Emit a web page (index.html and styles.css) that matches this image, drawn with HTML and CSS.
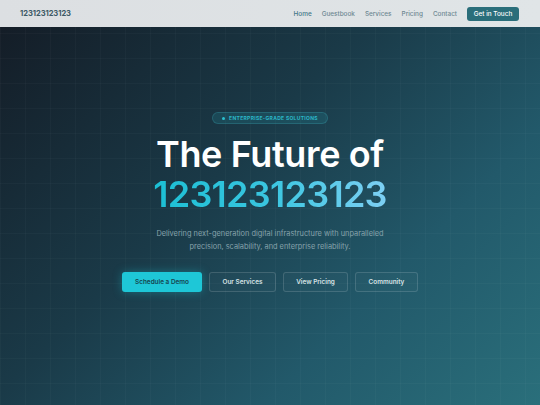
FILE: index.html
```html
<!DOCTYPE html>
<html lang="en">
<head>
<meta charset="utf-8">
<title>123123123123</title>
<link rel="stylesheet" href="styles.css">
</head>
<body>
<header class="topbar">
  <div class="logo">123123123123</div>
  <nav class="nav">
    <a class="nav-link active" href="#">Home</a>
    <a class="nav-link" href="#">Guestbook</a>
    <a class="nav-link" href="#">Services</a>
    <a class="nav-link" href="#">Pricing</a>
    <a class="nav-link" href="#">Contact</a>
    <a class="nav-cta" href="#">Get in Touch</a>
  </nav>
</header>
<main class="hero">
  <div class="hero-inner">
    <div class="badge"><span class="dot"></span>ENTERPRISE-GRADE SOLUTIONS</div>
    <h1 class="title">
      <span class="title-line">The Future of</span>
      <span class="title-grad">123123123123</span>
    </h1>
    <p class="lead">Delivering next-generation digital infrastructure with unparalleled<br>precision, scalability, and enterprise reliability.</p>
    <div class="actions">
      <a class="btn btn-primary" href="#">Schedule a Demo</a>
      <a class="btn btn-ghost" href="#">Our Services</a>
      <a class="btn btn-ghost" href="#">View Pricing</a>
      <a class="btn btn-ghost" href="#">Community</a>
    </div>
  </div>
</main>
</body>
</html>
```
FILE: styles.css
```css
* { box-sizing: border-box; }
html, body { margin: 0; padding: 0; }
body {
  width: 540px;
  height: 405px;
  overflow: hidden;
  font-family: Inter, "Noto Sans", sans-serif;
  background: #16222c;
}
a { text-decoration: none; }

.topbar {
  height: 27px;
  background: linear-gradient(90deg, #dcdfe2, #e0e5e7);
  display: flex;
  align-items: center;
  justify-content: space-between;
  padding: 0 21px 0 20px;
}
.logo {
  font-size: 7.6px;
  font-weight: 700;
  color: #3d5a66;
  letter-spacing: -0.01em;
}
.nav {
  display: flex;
  align-items: center;
}
.nav-link {
  font-size: 6.4px;
  font-weight: 500;
  color: #6e8892;
  margin-right: 10px;
}
.nav-link.active { color: #3f7687; }
.nav-link:last-of-type { margin-right: 12px; }
.nav-cta {
  background: #2a6e7a;
  color: #ffffff;
  font-size: 6.4px;
  font-weight: 500;
  height: 14px;
  width: 52px;
  justify-content: center;
  border-radius: 3px;
  display: flex;
  align-items: center;
}

.hero {
  height: 378px;
  background-color: #1b3641;
  background-image:
    linear-gradient(rgba(255,255,255,0.025) 1px, transparent 1px),
    linear-gradient(90deg, rgba(255,255,255,0.025) 1px, transparent 1px),
    linear-gradient(135deg, #141d27 0%, #1a3a48 40%, #22596a 70%, #2a6f7b 100%);
  background-size: 25px 25px, 25px 25px, 100% 100%;
  background-position: 0 6px, 0 0, 0 0;
  display: flex;
  justify-content: center;
}
.hero-inner {
  display: flex;
  flex-direction: column;
  align-items: center;
  padding-top: 85px;
}
.badge {
  display: flex;
  align-items: center;
  height: 12px;
  padding: 0 9px;
  border-radius: 7px;
  background: rgba(40, 160, 175, 0.18);
  border: 1px solid rgba(70, 190, 200, 0.22);
  color: #2bb7c8;
  font-size: 5px;
  font-weight: 700;
  letter-spacing: 0.06em;
}
.dot {
  width: 3px;
  height: 3px;
  border-radius: 50%;
  background: #2bc0cf;
  margin-right: 4px;
}
.title {
  margin: 10px 0 0;
  display: flex;
  flex-direction: column;
  align-items: center;
  font-weight: 600;
  font-size: 36px;
  line-height: 40px;
  letter-spacing: -0.01em;
}
.title-line { color: #ffffff; }
.title-grad {
  background: linear-gradient(90deg, #1bbfd4 0%, #3ac6e0 50%, #7ed0f4 100%);
  -webkit-background-clip: text;
  background-clip: text;
  color: transparent;
  letter-spacing: -0.02em;
}
.lead {
  margin: 13px 0 0;
  text-align: center;
  color: #86a2ab;
  font-size: 7.4px;
  line-height: 13px;
}
.actions {
  display: flex;
  gap: 7px;
  margin-top: 19px;
}
.btn {
  height: 20px;
  display: flex;
  align-items: center;
  justify-content: center;
  border-radius: 3px;
  font-size: 6.4px;
  font-weight: 600;
}
.btn-primary {
  width: 80px;
  background: #1ec7d7;
  color: #164550;
  box-shadow: 0 0 10px rgba(30, 200, 215, 0.35);
}
.btn-ghost {
  background: rgba(255,255,255,0.02);
  border: 1px solid rgba(255,255,255,0.14);
  color: #d6e2e5;
}
.btn-ghost:nth-child(2) { width: 67px; }
.btn-ghost:nth-child(3) { width: 65px; }
.btn-ghost:nth-child(4) { width: 63px; }
```
